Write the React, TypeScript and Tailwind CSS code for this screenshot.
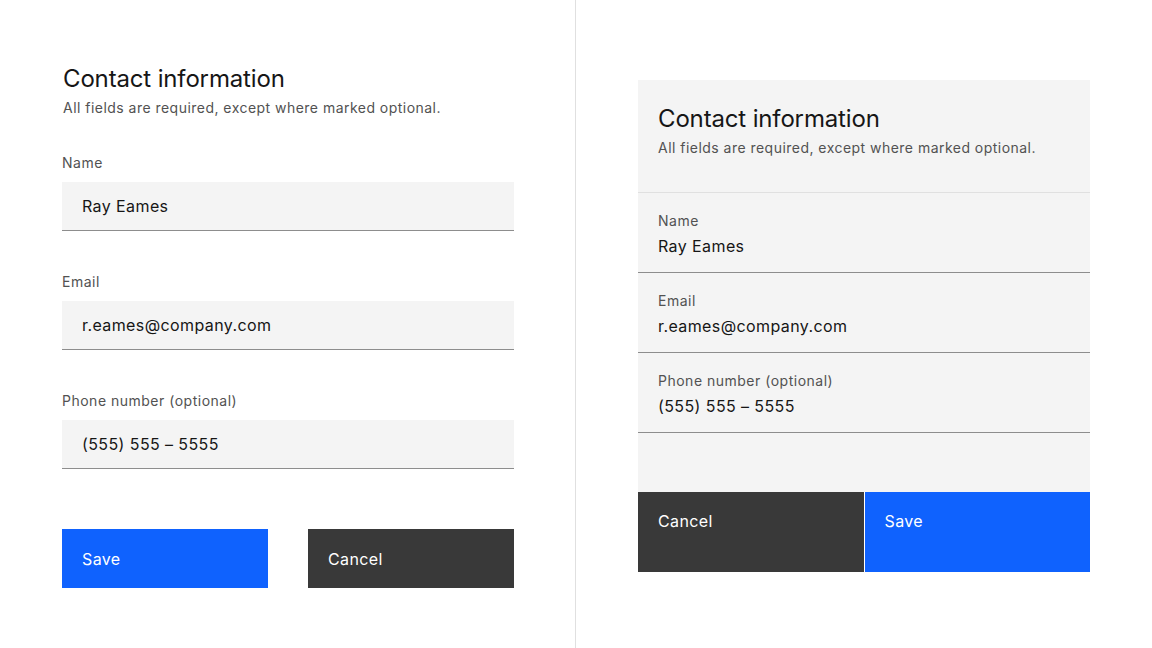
const FONT = "font-['Inter','Noto_Sans',sans-serif]";

const fields = [
  { label: "Name", value: "Ray Eames" },
  { label: "Email", value: "r.eames@company.com" },
  { label: "Phone number (optional)", value: "(555) 555 – 5555" },
];

function StackedForm() {
  return (
    <div className="w-[576px] shrink-0 border-r border-[#e0e0e0] pl-[62px] pt-[63px]">
      <div className="w-[452px]">
        <h2 className="pl-px text-[24px] leading-8 tracking-[-0.15px] text-[#161616]">Contact information</h2>
        <p className="mt-[3px] pl-px text-[14px] leading-5 tracking-[0.47px] text-[#525252]">
          All fields are required, except where marked optional.
        </p>
        <div className="flex flex-col gap-[43px] pt-[37px]">
          {fields.map((f) => (
            <div key={f.label}>
              <p className="text-[14px] leading-4 tracking-[0.5px] text-[#525252]">{f.label}</p>
              <div className="-mt-px pt-[12px]">
                <div className="flex h-[49px] items-center border-b border-[#8d8d8d] bg-[#f4f4f4] px-5 text-[16px] tracking-[0.4px] text-[#161616]">
                  {f.value}
                </div>
              </div>
            </div>
          ))}
        </div>
        <div className="mt-[60px] flex justify-between">
          <button className="h-[59px] w-[206px] bg-[#0f62fe] px-5 text-left text-[16px] tracking-[0.37px] text-white">
            Save
          </button>
          <button className="h-[59px] w-[206px] bg-[#393939] px-5 text-left text-[16px] tracking-[0.37px] text-white">
            Cancel
          </button>
        </div>
      </div>
    </div>
  );
}

function FluidForm() {
  return (
    <div className="flex-1 pl-[62px] pt-[80px]">
      <div className="w-[452px] bg-[#f4f4f4]">
        <div className="border-b border-[#e0e0e0] px-5 pb-[34px] pt-[23px]">
          <h2 className="text-[24px] leading-8 tracking-[-0.15px] text-[#161616]">Contact information</h2>
          <p className="mt-[3px] text-[14px] leading-5 tracking-[0.47px] text-[#525252]">
            All fields are required, except where marked optional.
          </p>
        </div>
        {fields.map((f) => (
          <div key={f.label} className="h-[80px] border-b border-[#8d8d8d] px-5 pt-[20px]">
            <p className="text-[14px] leading-4 tracking-[0.5px] text-[#525252]">{f.label}</p>
            <p className="mt-[5px] text-[16px] leading-6 tracking-[0.4px] text-[#161616]">{f.value}</p>
          </div>
        ))}
        <div className="h-[59px]" />
        <div className="grid grid-cols-2 gap-px bg-white">
          <button className="h-[80px] bg-[#393939] px-5 pb-[22px] text-left text-[16px] tracking-[0.37px] text-white">
            Cancel
          </button>
          <button className="h-[80px] bg-[#0f62fe] px-5 pb-[22px] text-left text-[16px] tracking-[0.37px] text-white">
            Save
          </button>
        </div>
      </div>
    </div>
  );
}

export default function App() {
  return (
    <div className={`${FONT} flex h-[648px] w-[1152px] bg-white`}>
      <StackedForm />
      <FluidForm />
    </div>
  );
}
